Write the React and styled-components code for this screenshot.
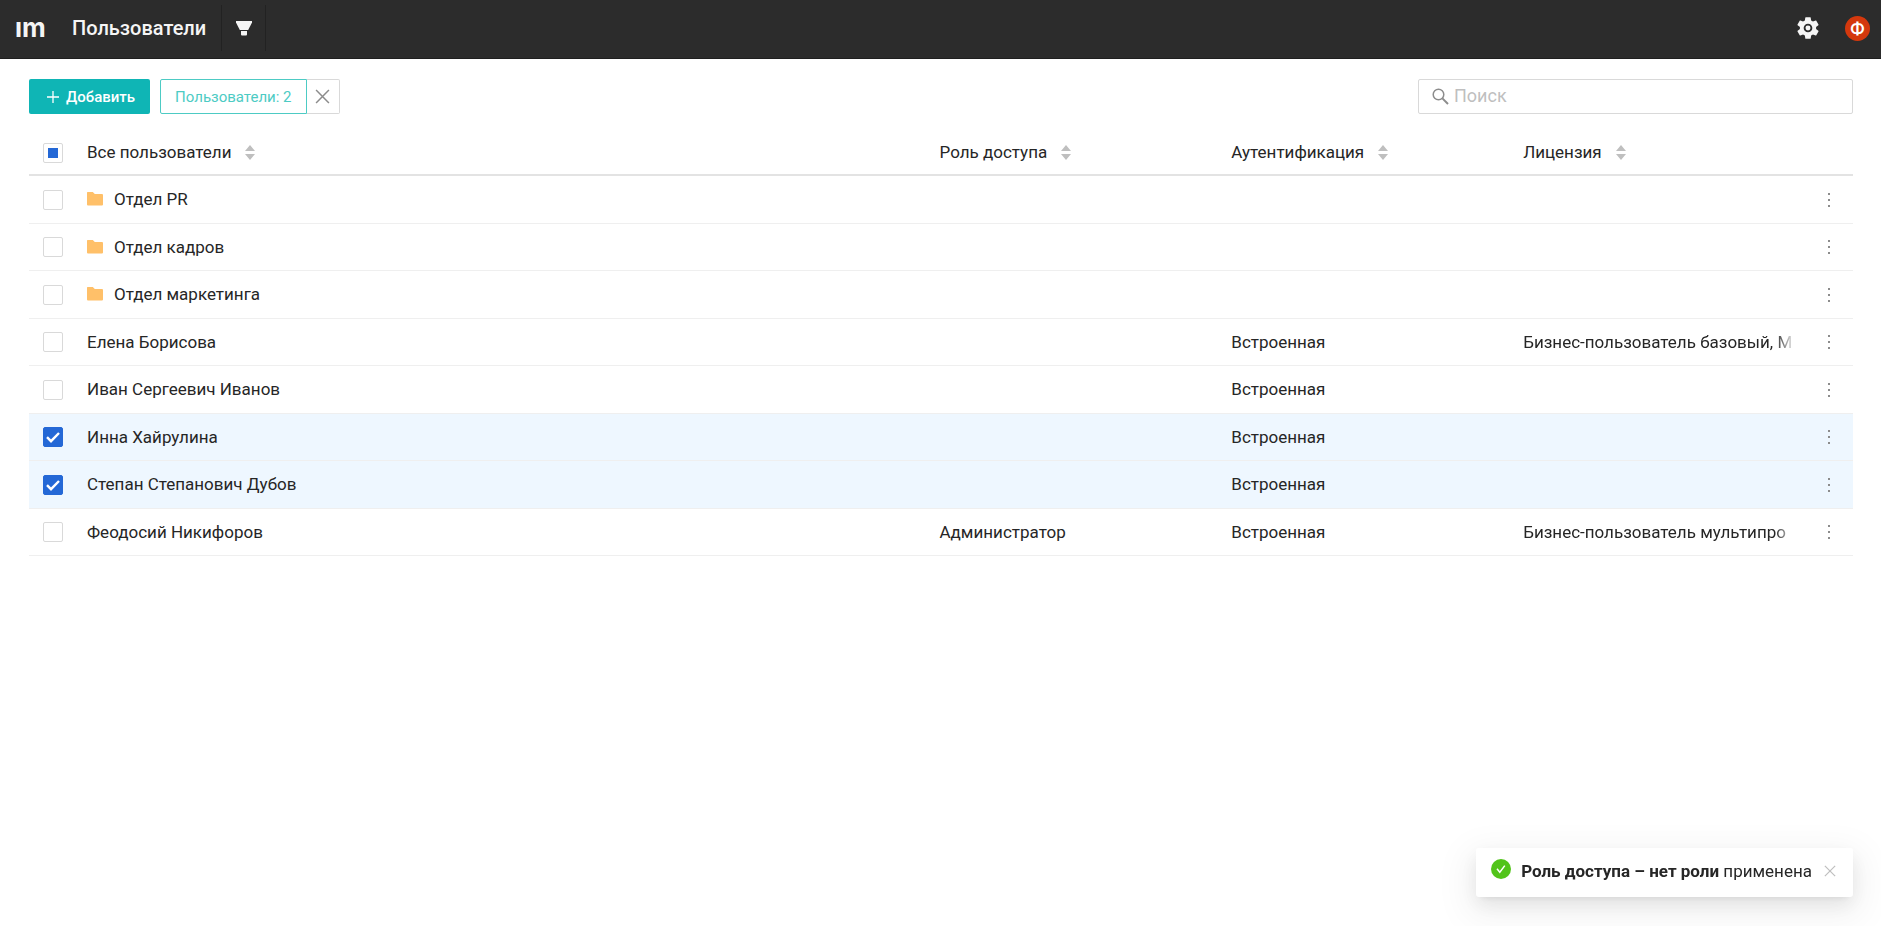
import React, { useEffect, useRef, useState } from 'react';
import styled, { createGlobalStyle } from 'styled-components';

const GlobalStyle = createGlobalStyle`
  * {
    box-sizing: border-box;
  }

  body {
    margin: 0;

    background-color: #ffffff;
    color: #262626;

    font-family: Roboto, "Liberation Sans", sans-serif;
    font-size: 17px;
    line-height: 26px;
  }

  button,
  input {
    margin: 0;
    font-family: inherit;
  }
`;

const Page = styled.div`
  display: flex;
  flex-direction: column;

  min-height: 100vh;
`;

const Header = styled.header`
  display: flex;
  align-items: center;

  height: 59px;
  padding: 0 11px 2px 15px;

  background-color: #2c2c2c;
  border-bottom: 1px solid #1f1f1f;
  color: #f5f5f5;
`;

const Logo = styled.a`
  width: 57px;

  color: inherit;

  font-family: Inter, sans-serif;
  font-size: 26px;
  font-weight: 700;
  text-decoration: none;
`;

const PageTitle = styled.h1`
  margin: 0 15px 0 0;

  font-size: 20px;
  font-weight: 500;
`;

const FilterButton = styled.button`
  display: flex;
  align-items: center;
  justify-content: center;

  width: 45px;
  height: 46px;
  padding: 0;

  background: none;
  border: solid #222222;
  border-width: 0 1px;
  color: inherit;
`;

const HeaderActions = styled.div`
  display: flex;
  align-items: center;
  gap: 24px;

  margin-left: auto;
`;

const IconButton = styled.button`
  display: flex;
  align-items: center;
  justify-content: center;

  padding: 0;

  background: none;
  border: none;
  color: ${props => props.$color || 'inherit'};
`;

const Avatar = styled.button`
  width: 25px;
  height: 25px;
  padding: 0;

  background-color: #d4380d;
  border: none;
  border-radius: 50%;
  color: #ffffff;

  font-size: 18px;
  font-weight: 500;
  line-height: 25px;
  text-align: center;
`;

const Main = styled.main`
  padding: 20px 28px 0 29px;
`;

const Toolbar = styled.div`
  display: flex;
  align-items: center;
  gap: 10px;
`;

const AddButton = styled.button`
  display: flex;
  align-items: center;
  gap: 7px;

  height: 35px;
  padding: 0 15px 0 18px;

  background-color: #0fb5b5;
  border: none;
  border-radius: 2px;
  color: #ffffff;

  font-size: 15px;
  font-weight: 500;
`;

const SelectionGroup = styled.div`
  display: flex;
`;

const SelectionButton = styled.button`
  height: 35px;
  padding: 0 14px;

  background-color: #ffffff;
  border: 1px solid #4dcbc4;
  border-radius: 2px 0 0 2px;
  color: #4dcbc4;

  font-size: 15px;
`;

const ClearButton = styled.button`
  display: flex;
  align-items: center;
  justify-content: center;

  width: 33px;
  height: 35px;
  padding: 0;

  background-color: #ffffff;
  border: 1px solid #d9d9d9;
  border-left: none;
  border-radius: 0 2px 2px 0;
  color: #8c8c8c;
`;

const SearchBox = styled.label`
  display: flex;
  align-items: center;
  gap: 5px;

  width: 435px;
  height: 35px;
  margin-left: auto;
  padding: 0 13px;

  border: 1px solid #d9d9d9;
  border-radius: 2px;
  color: #8c8c8c;
`;

const SearchInput = styled.input`
  flex: 1;

  min-width: 0;
  padding: 0 0 2px;

  background: none;
  border: none;
  outline: none;
  color: #262626;

  font-size: 18px;

  &::placeholder {
    color: #bfbfbf;
    opacity: 1;
  }
`;

const Table = styled.table`
  width: 100%;
  margin-top: 14px;

  border-collapse: separate;
  border-spacing: 0;
  table-layout: fixed;
`;

const Column = styled.col`
  width: ${props => props.$width || 'auto'};
`;

const HeadCell = styled.th`
  height: 48px;
  padding: 2px 10px 0;

  border-bottom: 2px solid #e3e3e3;

  font-weight: 400;
  text-align: left;
`;

const HeadLabel = styled.div`
  display: flex;
  align-items: center;
  gap: 14px;
`;

const Cell = styled.td`
  padding: 0 10px 2px;

  border-bottom: 1px solid #efefef;
`;

const Row = styled.tr`
  height: 48px;

  background-color: ${props => props.$selected ? '#eef7ff' : 'transparent'};

  &:nth-child(even) {
    height: 47px;
  }

  &:nth-child(even) ${Cell} {
    padding-bottom: 0;
  }
`;

const CheckCell = styled(Cell)`
  padding: 0 14px;
`;

const CheckHeadCell = styled(HeadCell)`
  padding: 4px 14px 0;
`;

const MenuCell = styled(Cell)`
  padding: 0;
`;

const NameContent = styled.div`
  display: flex;
  align-items: center;
  gap: 11px;
`;

const FadedText = styled.div`
  overflow: hidden;

  white-space: nowrap;

  mask-image: linear-gradient(to left, transparent, #000000 20px);
`;

const MenuButton = styled(IconButton)`
  width: 100%;
  height: 30px;
`;

const Checkbox = styled.input`
  display: block;

  width: 20px;
  height: 20px;

  appearance: none;
  background: #ffffff center no-repeat;
  border: 1px solid #d9d9d9;
  border-radius: 2px;

  &:checked {
    background-color: #2468d6;
    background-image: url("data:image/svg+xml,%3Csvg xmlns='http://www.w3.org/2000/svg' width='16' height='16' fill='none' stroke='white' stroke-width='2.4'%3E%3Cpath d='M2 8.2l4 4L14 4'/%3E%3C/svg%3E");
    border-color: #2468d6;
  }

  &:indeterminate {
    background-color: #ffffff;
    background-image: linear-gradient(#2468d6, #2468d6);
    background-size: 10px 10px;
    border-color: #d9d9d9;
  }
`;

const Toast = styled.div`
  position: fixed;
  right: 28px;
  bottom: 29px;

  display: flex;
  align-items: flex-start;

  height: 49px;
  padding: 10px 17px 0 15px;

  background-color: #ffffff;
  border-radius: 3px;
  box-shadow:
    0 4px 8px -5px rgba(0, 0, 0, 0.12),
    0 8px 20px 0 rgba(0, 0, 0, 0.08),
    0 11px 35px 10px rgba(0, 0, 0, 0.05);
`;

const ToastText = styled.span`
  margin: 0 12px 0 10px;
`;

const ToastStrong = styled.strong`
  font-weight: 700;
`;

const ToastClose = styled(IconButton)`
  height: 26px;
`;

const FilterIcon = () => (
  <svg width='16' height='15' viewBox='0 0 16 15' fill='currentColor'>
    <path d='M0 0h16v1.4L12.2 9H3.8L0 1.4z' />
    <path d='M5 10h6v3.4a1 1 0 0 1-1 1H6a1 1 0 0 1-1-1z' />
  </svg>
);

const GearIcon = () => (
  <svg width='26' height='26' viewBox='0 0 24 24' fill='currentColor'>
    <path fillRule='evenodd' d='M19.43 12.98c.04-.32.07-.64.07-.98s-.03-.66-.07-.98l2.11-1.65c.19-.15.24-.42.12-.64l-2-3.46c-.12-.22-.39-.3-.61-.22l-2.49 1c-.52-.4-1.08-.73-1.69-.98l-.38-2.65A.49.49 0 0 0 14 2h-4c-.25 0-.46.18-.49.42l-.38 2.65c-.61.25-1.17.59-1.69.98l-2.49-1c-.23-.09-.49 0-.61.22l-2 3.46c-.13.22-.07.49.12.64l2.11 1.65c-.04.32-.07.65-.07.98s.03.66.07.98l-2.11 1.65c-.19.15-.24.42-.12.64l2 3.46c.12.22.39.3.61.22l2.49-1c.52.4 1.08.73 1.69.98l.38 2.65c.03.24.24.42.49.42h4c.25 0 .46-.18.49-.42l.38-2.65c.61-.25 1.17-.59 1.69-.98l2.49 1c.23.09.49 0 .61-.22l2-3.46c.12-.22.07-.49-.12-.64l-2.11-1.65zM12 8a4 4 0 1 0 0 8 4 4 0 0 0 0-8z' />
    <circle cx='12' cy='12' r='2.3' />
  </svg>
);

const PlusIcon = () => (
  <svg width='12' height='12' viewBox='0 0 12 12' stroke='currentColor' strokeWidth='1.3'>
    <path d='M6 0v12M0 6h12' />
  </svg>
);

const CrossIcon = ({ size, strokeWidth }) => (
  <svg width={size} height={size} viewBox='0 0 14 14' stroke='currentColor' strokeWidth={strokeWidth}>
    <path d='M1 1l12 12M13 1L1 13' />
  </svg>
);

const SearchIcon = () => (
  <svg width='17' height='17' viewBox='0 0 17 17' fill='none' stroke='currentColor' strokeWidth='1.5'>
    <circle cx='6.5' cy='6.5' r='5.3' />
    <path d='M10.4 10.4l5.6 5.6' strokeWidth='2' />
  </svg>
);

const SortIcon = () => (
  <svg width='10' height='15' viewBox='0 0 10 15' fill='#bfbfbf'>
    <path d='M5 0l5 6H0zM5 15l5-6H0z' />
  </svg>
);

const FolderIcon = () => (
  <svg width='16' height='14' viewBox='0 0 16 14' fill='#ffc069'>
    <path d='M.5 0h5.3l2 2H15a1 1 0 0 1 1 1v9.5a1 1 0 0 1-1 1H1a1 1 0 0 1-1-1V.5z' />
  </svg>
);

const DotsIcon = () => (
  <svg width='2' height='14' viewBox='0 0 2 14' fill='#8c8c8c'>
    <path d='M0 0h2v2H0zM0 6h2v2H0zM0 12h2v2H0z' />
  </svg>
);

const SuccessIcon = () => (
  <svg width='20' height='22' viewBox='0 -1 20 22' fill='none'>
    <circle cx='10' cy='10' r='10' fill='#52c41a' />
    <path d='M6 9.8l2.8 3.4 5-6.6' stroke='#ffffff' strokeWidth='1.5' />
  </svg>
);

const columns = ['Все пользователи', 'Роль доступа', 'Аутентификация', 'Лицензия'];

const rows = [
  { id: 1, name: 'Отдел PR', isFolder: true },
  { id: 2, name: 'Отдел кадров', isFolder: true },
  { id: 3, name: 'Отдел маркетинга', isFolder: true },
  { id: 4, name: 'Елена Борисова', auth: 'Встроенная', license: 'Бизнес-пользователь базовый, М' },
  { id: 5, name: 'Иван Сергеевич Иванов', auth: 'Встроенная' },
  { id: 6, name: 'Инна Хайрулина', auth: 'Встроенная' },
  { id: 7, name: 'Степан Степанович Дубов', auth: 'Встроенная' },
  { id: 8, name: 'Феодосий Никифоров', role: 'Администратор', auth: 'Встроенная', license: 'Бизнес-пользователь мультипро' },
];

const UsersTable = ({ selected, onToggle, onToggleAll }) => {
  const allRef = useRef(null);

  useEffect(() => {
    allRef.current.indeterminate = selected.length > 0 && selected.length < rows.length;
  }, [selected]);

  return (
    <Table>
      <colgroup>
        <Column $width='48px' />
        <Column />
        <Column $width='16%' />
        <Column $width='16%' />
        <Column $width='16%' />
        <Column $width='48px' />
      </colgroup>
      <thead>
        <tr>
          <CheckHeadCell>
            <Checkbox
              ref={allRef}
              type='checkbox'
              aria-label='Выбрать всех'
              checked={selected.length === rows.length}
              onChange={onToggleAll}
            />
          </CheckHeadCell>
          {columns.map(column => (
            <HeadCell key={column}>
              <HeadLabel>{column}<SortIcon /></HeadLabel>
            </HeadCell>
          ))}
          <HeadCell />
        </tr>
      </thead>
      <tbody>
        {rows.map(({ id, name, isFolder, role, auth, license }) => (
          <Row key={id} $selected={selected.includes(id)}>
            <CheckCell>
              <Checkbox
                type='checkbox'
                aria-label={name}
                checked={selected.includes(id)}
                onChange={() => onToggle(id)}
              />
            </CheckCell>
            <Cell>
              <NameContent>{isFolder && <FolderIcon />}{name}</NameContent>
            </Cell>
            <Cell>{role}</Cell>
            <Cell>{auth}</Cell>
            <Cell>{license && <FadedText>{license}</FadedText>}</Cell>
            <MenuCell>
              <MenuButton aria-label='Действия'><DotsIcon /></MenuButton>
            </MenuCell>
          </Row>
        ))}
      </tbody>
    </Table>
  );
};

const App = () => {
  const [selected, setSelected] = useState([6, 7]);
  const [isToastOpen, setIsToastOpen] = useState(true);

  const toggle = id => setSelected(selected.includes(id)
    ? selected.filter(item => item !== id)
    : [...selected, id]);

  const toggleAll = () => setSelected(selected.length === rows.length
    ? []
    : rows.map(({ id }) => id));

  return (
    <Page>
      <GlobalStyle />
      <Header>
        <Logo href='#'>ım</Logo>
        <PageTitle>Пользователи</PageTitle>
        <FilterButton aria-label='Фильтр'><FilterIcon /></FilterButton>
        <HeaderActions>
          <IconButton aria-label='Настройки'><GearIcon /></IconButton>
          <Avatar>Ф</Avatar>
        </HeaderActions>
      </Header>
      <Main>
        <Toolbar>
          <AddButton><PlusIcon />Добавить</AddButton>
          {selected.length > 0
            && <SelectionGroup>
                <SelectionButton>Пользователи: {selected.length}</SelectionButton>
                <ClearButton aria-label='Сбросить' onClick={() => setSelected([])}>
                  <CrossIcon size={15} strokeWidth={1.4} />
                </ClearButton>
              </SelectionGroup>}
          <SearchBox>
            <SearchIcon />
            <SearchInput type='text' placeholder='Поиск' aria-label='Поиск' />
          </SearchBox>
        </Toolbar>
        <UsersTable selected={selected} onToggle={toggle} onToggleAll={toggleAll} />
      </Main>
      {isToastOpen
        && <Toast role='status'>
            <SuccessIcon />
            <ToastText><ToastStrong>Роль доступа – нет роли</ToastStrong> применена</ToastText>
            <ToastClose $color='#bfbfbf' aria-label='Закрыть' onClick={() => setIsToastOpen(false)}>
              <CrossIcon size={12} strokeWidth={1.4} />
            </ToastClose>
          </Toast>}
    </Page>
  );
};

export default App;
